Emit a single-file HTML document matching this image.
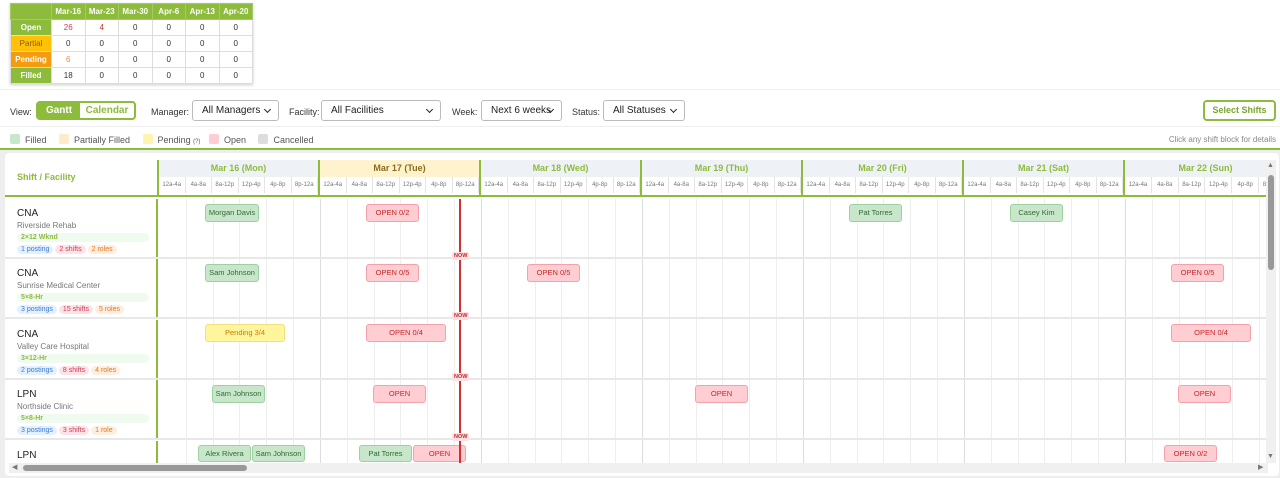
<!DOCTYPE html>
<html><head><meta charset="utf-8"><style>
*{box-sizing:border-box;margin:0;padding:0}
body{width:1280px;height:478px;overflow:hidden;background:#fff;font-family:"Liberation Sans",Arial,sans-serif;position:relative;color:#333}
.abs{position:absolute}
table.sum{position:absolute;left:10px;top:3px;border-collapse:collapse;font-size:8px;box-shadow:0 1px 3px rgba(0,0,0,.2)}
table.sum td,table.sum th{border:1px solid #ddd;height:16px;text-align:center;width:33.5px}
table.sum th{background:#8dbb3c;color:#fff;font-weight:bold;border-color:#a5c96a}
table.sum td.l{width:41px;color:#fff;font-weight:bold}
.ctl{font-size:9px;color:#333;top:107px}
.sel{position:absolute;top:100px;height:21px;border:1px solid #bbb;border-radius:3px;background:#fff;font-size:10px;padding-left:9px;line-height:19px;color:#222}
.sel:after{content:"";position:absolute;right:8px;top:6px;width:4px;height:4px;border-right:1.5px solid #222;border-bottom:1.5px solid #222;transform:rotate(45deg)}
.leg{top:134px;font-size:9px;color:#555}
.sw{display:inline-block;width:10px;height:10px;border-radius:2px;vertical-align:-1px;margin-right:5px}
.card{left:5px;top:153px;width:1274px;height:323px;background:#fff;border-radius:4px}
.day{position:absolute;top:160px;width:161px;height:36px;border-left:2px solid #8dbb3c}
.dh{height:17px;background:#eef2f7;color:#8dbb3c;font-size:9px;font-weight:bold;text-align:center;line-height:17px}
.day.t .dh{background:#fff3cd;color:#8a6d1b}
.subs{display:flex;height:16px}
.subs span{flex:1;font-size:6px;color:#777;text-align:center;line-height:16px;border-right:1px solid #e4e4e4}
.row{position:absolute;left:5px;width:1261px;height:60px;border-bottom:2px solid #e8e8e8}
.lab{position:absolute;left:0;top:0;width:153px;height:58px;border-right:2px solid #8dbb3c;padding:9px 0 0 12px}
.lab b{display:block;font-size:10px;font-weight:normal;color:#222}
.lab i{display:block;font-style:normal;font-size:8px;color:#777;margin-top:2px}
.tag{margin-top:3px;width:132px;height:9px;background:#f0fbef;border-radius:5px;font-size:7px;color:#8dbb3c;font-weight:bold;padding-left:4px;line-height:9px}
.pills{margin-top:3px;font-size:7px}
.pills span{display:inline-block;padding:1px 4px;border-radius:5px;margin-right:2px}
.p1{background:#e3f0fd;color:#3a7bd5}.p2{background:#fde3e8;color:#d33a55}.p3{background:#fdeee0;color:#e07a20}
.blk{position:absolute;height:18px;border-radius:3px;font-size:7.5px;text-align:center;line-height:16px;border:1px solid}
.f{background:#c8e6c9;border-color:#9fd0a2;color:#2e6b34}
.o{background:#ffcdd2;border-color:#f4a1aa;color:#c62828}
.p{background:#fff59d;border-color:#f0e080;color:#c77d00}
.vl{position:absolute;top:199px;height:264px;width:1px;background:#eee}
.vd{background:#ddd}
.now{position:absolute;left:459px;width:2px;background:#d32f2f}
.nl{position:absolute;left:452px;font-size:5.5px;font-weight:bold;color:#c62828;background:#fde0e3;padding:1px 2px;border-radius:2px}
</style></head><body>
<table class="sum">
<tr><th class="l" style="width:41px"></th><th>Mar-16</th><th>Mar-23</th><th>Mar-30</th><th>Apr-6</th><th>Apr-13</th><th>Apr-20</th></tr>
<tr><td class="l" style="background:#8dbb3c">Open</td><td style="color:#d33a55">26</td><td style="color:#d32f2f">4</td><td>0</td><td>0</td><td>0</td><td>0</td></tr>
<tr><td class="l" style="background:#ffc107;color:#8a5a00;font-weight:normal">Partial</td><td>0</td><td>0</td><td>0</td><td>0</td><td>0</td><td>0</td></tr>
<tr><td class="l" style="background:#f39c12">Pending</td><td style="color:#f08a4b">6</td><td>0</td><td>0</td><td>0</td><td>0</td><td>0</td></tr>
<tr><td class="l" style="background:#8dbb3c">Filled</td><td>18</td><td>0</td><td>0</td><td>0</td><td>0</td><td>0</td></tr>
</table>
<div class="abs" style="left:0;top:89px;width:1280px;height:1px;background:#eee"></div>
<div class="abs ctl" style="left:10px">View:</div>
<div class="abs" style="left:36px;top:101px;width:100px;height:19px;border:2px solid #8dbb3c;border-radius:4px;font-size:10px;font-weight:bold;overflow:hidden;display:flex"><span style="width:42px;background:#8dbb3c;color:#fff;text-align:center;line-height:15px">Gantt</span><span style="flex:1;color:#8dbb3c;text-align:center;line-height:15px">Calendar</span></div>
<div class="abs ctl" style="left:151px">Manager:</div>
<div class="sel" style="left:192px;width:87px">All Managers</div>
<div class="abs ctl" style="left:289px">Facility:</div>
<div class="sel" style="left:321px;width:120px">All Facilities</div>
<div class="abs ctl" style="left:452px">Week:</div>
<div class="sel" style="left:481px;width:81px">Next 6 weeks</div>
<div class="abs ctl" style="left:572px">Status:</div>
<div class="sel" style="left:603px;width:82px">All Statuses</div>
<div class="abs" style="left:1203px;top:100px;width:73px;height:21px;border:2px solid #8dbb3c;border-radius:4px;color:#7aa52e;font-size:9px;font-weight:bold;text-align:center;line-height:17px;white-space:nowrap">Select Shifts</div>
<div class="abs" style="left:0;top:126px;width:1280px;height:1px;background:#eee"></div>
<div class="abs leg" style="left:10px"><span class="sw" style="background:#c8e6c9"></span>Filled <span class="sw" style="background:#fdeccc;margin-left:10px"></span>Partially Filled <span class="sw" style="background:#fff3b0;margin-left:10px"></span>Pending <span style="font-size:6px">(?)</span> <span class="sw" style="background:#ffcdd2;margin-left:6px"></span>Open <span class="sw" style="background:#ddd;margin-left:10px"></span>Cancelled</div>
<div class="abs" style="right:4px;top:135px;font-size:8px;color:#888">Click any shift block for details</div>
<div class="abs" style="left:0;top:148px;width:1280px;height:330px;background:#eee;border-top:2px solid #8dbb3c"></div>
<div class="abs card"></div>
<div class="abs" style="left:17px;top:172px;font-size:9px;font-weight:bold;color:#8dbb3c">Shift / Facility</div>
<div class="day" style="left:157px"><div class="dh">Mar 16 (Mon)</div><div class="subs"><span>12a-4a</span><span>4a-8a</span><span>8a-12p</span><span>12p-4p</span><span>4p-8p</span><span>8p-12a</span></div></div>
<div class="day t" style="left:318px"><div class="dh">Mar 17 (Tue)</div><div class="subs"><span>12a-4a</span><span>4a-8a</span><span>8a-12p</span><span>12p-4p</span><span>4p-8p</span><span>8p-12a</span></div></div>
<div class="day" style="left:479px"><div class="dh">Mar 18 (Wed)</div><div class="subs"><span>12a-4a</span><span>4a-8a</span><span>8a-12p</span><span>12p-4p</span><span>4p-8p</span><span>8p-12a</span></div></div>
<div class="day" style="left:640px"><div class="dh">Mar 19 (Thu)</div><div class="subs"><span>12a-4a</span><span>4a-8a</span><span>8a-12p</span><span>12p-4p</span><span>4p-8p</span><span>8p-12a</span></div></div>
<div class="day" style="left:801px"><div class="dh">Mar 20 (Fri)</div><div class="subs"><span>12a-4a</span><span>4a-8a</span><span>8a-12p</span><span>12p-4p</span><span>4p-8p</span><span>8p-12a</span></div></div>
<div class="day" style="left:962px"><div class="dh">Mar 21 (Sat)</div><div class="subs"><span>12a-4a</span><span>4a-8a</span><span>8a-12p</span><span>12p-4p</span><span>4p-8p</span><span>8p-12a</span></div></div>
<div class="day" style="left:1123px;width:143px;overflow:hidden"><div class="dh" style="width:161px">Mar 22 (Sun)</div><div class="subs" style="width:161px"><span>12a-4a</span><span>4a-8a</span><span>8a-12p</span><span>12p-4p</span><span>4p-8p</span><span>8p-12a</span></div></div>
<div class="abs" style="left:5px;top:195px;width:1261px;height:2px;background:#8dbb3c"></div>
<div class="vl" style="left:186px"></div><div class="vl" style="left:213px"></div><div class="vl" style="left:239px"></div><div class="vl" style="left:266px"></div><div class="vl" style="left:293px"></div><div class="vl vd" style="left:320px"></div>
<div class="vl" style="left:347px"></div><div class="vl" style="left:374px"></div><div class="vl" style="left:400px"></div><div class="vl" style="left:427px"></div><div class="vl" style="left:454px"></div><div class="vl vd" style="left:481px"></div>
<div class="vl" style="left:508px"></div><div class="vl" style="left:535px"></div><div class="vl" style="left:561px"></div><div class="vl" style="left:588px"></div><div class="vl" style="left:615px"></div><div class="vl vd" style="left:642px"></div>
<div class="vl" style="left:669px"></div><div class="vl" style="left:696px"></div><div class="vl" style="left:722px"></div><div class="vl" style="left:749px"></div><div class="vl" style="left:776px"></div><div class="vl vd" style="left:803px"></div>
<div class="vl" style="left:830px"></div><div class="vl" style="left:857px"></div><div class="vl" style="left:883px"></div><div class="vl" style="left:910px"></div><div class="vl" style="left:937px"></div><div class="vl vd" style="left:964px"></div>
<div class="vl" style="left:991px"></div><div class="vl" style="left:1018px"></div><div class="vl" style="left:1044px"></div><div class="vl" style="left:1071px"></div><div class="vl" style="left:1098px"></div><div class="vl vd" style="left:1125px"></div>
<div class="vl" style="left:1152px"></div><div class="vl" style="left:1179px"></div><div class="vl" style="left:1205px"></div><div class="vl" style="left:1232px"></div><div class="vl" style="left:1259px"></div>
<div class="row" style="top:199px"><div class="lab"><b>CNA</b><i>Riverside Rehab</i><div class="tag">2×12 Wknd</div><div class="pills"><span class="p1">1 posting</span><span class="p2">2 shifts</span><span class="p3">2 roles</span></div></div></div>
<div class="row" style="top:259px"><div class="lab"><b>CNA</b><i>Sunrise Medical Center</i><div class="tag">5×8-Hr</div><div class="pills"><span class="p1">3 postings</span><span class="p2">15 shifts</span><span class="p3">5 roles</span></div></div></div>
<div class="row" style="top:320px"><div class="lab"><b>CNA</b><i>Valley Care Hospital</i><div class="tag">3×12-Hr</div><div class="pills"><span class="p1">2 postings</span><span class="p2">8 shifts</span><span class="p3">4 roles</span></div></div></div>
<div class="row" style="top:380px"><div class="lab"><b>LPN</b><i>Northside Clinic</i><div class="tag">5×8-Hr</div><div class="pills"><span class="p1">3 postings</span><span class="p2">3 shifts</span><span class="p3">1 role</span></div></div></div>
<div class="row" style="top:441px;height:22px;border:0;overflow:hidden"><div class="lab"><b>LPN</b></div></div>
<div class="now" style="top:199px;height:264px"></div>
<div class="nl" style="top:252px">NOW</div><div class="nl" style="top:312px">NOW</div><div class="nl" style="top:373px">NOW</div><div class="nl" style="top:433px">NOW</div>
<div class="blk f" style="left:205px;top:204px;width:54px">Morgan Davis</div>
<div class="blk o" style="left:366px;top:204px;width:53px">OPEN 0/2</div>
<div class="blk f" style="left:849px;top:204px;width:53px">Pat Torres</div>
<div class="blk f" style="left:1010px;top:204px;width:53px">Casey Kim</div>
<div class="blk f" style="left:205px;top:264px;width:54px">Sam Johnson</div>
<div class="blk o" style="left:366px;top:264px;width:53px">OPEN 0/5</div>
<div class="blk o" style="left:527px;top:264px;width:53px">OPEN 0/5</div>
<div class="blk o" style="left:1171px;top:264px;width:53px">OPEN 0/5</div>
<div class="blk p" style="left:205px;top:324px;width:80px">Pending 3/4</div>
<div class="blk o" style="left:366px;top:324px;width:80px">OPEN 0/4</div>
<div class="blk o" style="left:1171px;top:324px;width:80px">OPEN 0/4</div>
<div class="blk f" style="left:212px;top:385px;width:53px">Sam Johnson</div>
<div class="blk o" style="left:373px;top:385px;width:53px">OPEN</div>
<div class="blk o" style="left:695px;top:385px;width:53px">OPEN</div>
<div class="blk o" style="left:1178px;top:385px;width:53px">OPEN</div>
<div class="blk f" style="left:198px;top:445px;width:53px;height:17px">Alex Rivera</div>
<div class="blk f" style="left:252px;top:445px;width:53px;height:17px">Sam Johnson</div>
<div class="blk f" style="left:359px;top:445px;width:53px;height:17px">Pat Torres</div>
<div class="blk o" style="left:413px;top:445px;width:53px;height:17px">OPEN</div>
<div class="now" style="top:445px;height:18px"></div>
<div class="blk o" style="left:1164px;top:445px;width:53px;height:17px">OPEN 0/2</div>
<div class="abs" style="left:9px;top:463px;width:1259px;height:10px;background:#f0f0f0"></div>
<div class="abs" style="left:23px;top:465px;width:224px;height:6px;background:#999;border-radius:3px"></div>
<div class="abs" style="left:12px;top:463px;font-size:7px;color:#777">◀</div>
<div class="abs" style="left:1258px;top:463px;font-size:7px;color:#777">▶</div>
<div class="abs" style="left:1266px;top:160px;width:10px;height:303px;background:#f0f0f0"></div>
<div class="abs" style="left:1268px;top:175px;width:6px;height:95px;background:#999;border-radius:3px"></div>
<div class="abs" style="left:1267px;top:162px;font-size:7px;color:#777">▲</div>
<div class="abs" style="left:1267px;top:453px;font-size:7px;color:#777">▼</div>
</body></html>
